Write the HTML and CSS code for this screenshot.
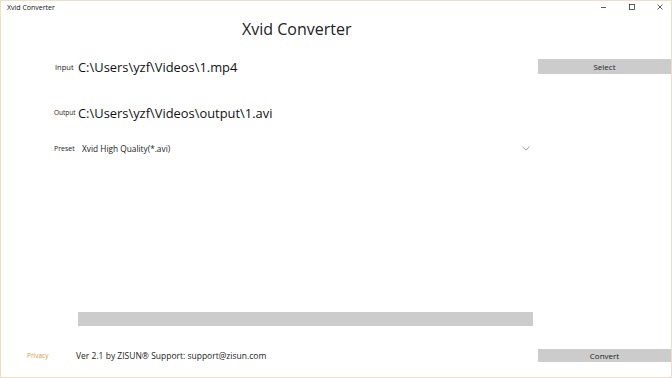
FILE: index.html
```
<!DOCTYPE html>
<html lang="en">
<head>
<meta charset="UTF-8">
<title>Xvid Converter</title>
<link rel="stylesheet" href="styles.css">
</head>
<body>
    <div class="window">
        <div class="titlebar">
            <span class="title">Xvid Converter</span>
            <div class="controls">
                <svg class="ctl" width="10" height="10" viewBox="0 0 10 10"><path d="M2 5.5h5" stroke="#333" stroke-width="0.8"/></svg>
                <svg class="ctl" width="10" height="10" viewBox="0 0 10 10"><rect x="2.5" y="2.5" width="5" height="5" fill="none" stroke="#333" stroke-width="0.8"/></svg>
                <svg class="ctl" width="10" height="10" viewBox="0 0 10 10"><path d="M2.5 2.5l5 5M7.5 2.5l-5 5" stroke="#333" stroke-width="0.8"/></svg>
            </div>
        </div>

        <div class="heading">Xvid Converter</div>

        <div class="row row-input">
            <span class="label">Input</span>
            <span class="path">C:\Users\yzf\Videos\1.mp4</span>
            <button class="btn">Select</button>
        </div>

        <div class="row row-output">
            <span class="label">Output</span>
            <span class="path">C:\Users\yzf\Videos\output\1.avi</span>
        </div>

        <div class="row row-preset">
            <span class="label">Preset</span>
            <span class="preset">Xvid High Quality(*.avi)</span>
            <svg class="chevron" width="8" height="5" viewBox="0 0 8 5"><path d="M0.5 0.8L4 4 7.5 0.8" fill="none" stroke="#888" stroke-width="0.8"/></svg>
        </div>

        <div class="progress"></div>

        <div class="row footer">
            <span class="privacy">Privacy</span>
            <span class="version">Ver 2.1 by ZISUN&reg; Support: support@zisun.com</span>
            <button class="btn">Convert</button>
        </div>
    </div>
</body>
</html>
```

FILE: styles.css
```
body {
    margin: 0;
    background: #fff;
}

.window {
    width: 672px;
    height: 378px;
    box-sizing: border-box;
    border: 1px solid #eee0c6;
    background: #fff;
    display: flex;
    flex-direction: column;
    font-family: "Open Sans", "Noto Sans", sans-serif;
    color: #111;
}

.titlebar {
    height: 12px;
    display: flex;
    align-items: center;
    padding-left: 6px;
}
.title {
    font-size: 7px;
    color: #111;
}
.controls {
    margin-left: auto;
    display: flex;
    gap: 18px;
    margin-right: 6px;
}

.heading {
    margin-top: 7px;
    height: 18px;
    line-height: 18px;
    padding-left: 241px;
    font-size: 16px;
    color: #222;
}

.row {
    display: flex;
    align-items: center;
    padding-left: 53px;
}
.label {
    width: 24px;
    font-size: 7.5px;
    color: #222;
}
.path {
    font-size: 12.9px;
    color: #111;
}

.btn {
    margin-left: auto;
    width: 133px;
    height: 100%;
    margin-right: 0;
    border: none;
    background: #cccccc;
    font-family: inherit;
    font-size: 8px;
    color: #222;
    padding: 0;
}

.row-input {
    margin-top: 21px;
    height: 15px;
}
.row-input .label {
    padding-left: 1px;
    width: 23px;
}
.row-output {
    margin-top: 31px;
    height: 15px;
}
.row-output .label {
    font-size: 6.5px;
}
.row-preset {
    margin-top: 21px;
    height: 14px;
}
.row-preset .label {
    width: 28px;
    font-size: 7px;
}
.preset {
    font-size: 8.3px;
    color: #222;
}
.chevron {
    margin-left: auto;
    margin-right: 141px;
}

.progress {
    margin-top: 157px;
    margin-left: 77px;
    width: 455px;
    height: 14px;
    background: #cccccc;
}

.footer {
    margin-top: 23px;
    height: 13px;
    padding-left: 26px;
}
.privacy {
    font-size: 6.5px;
    color: #d99a3c;
    width: 49px;
}
.version {
    font-size: 8.5px;
    color: #222;
}
```
